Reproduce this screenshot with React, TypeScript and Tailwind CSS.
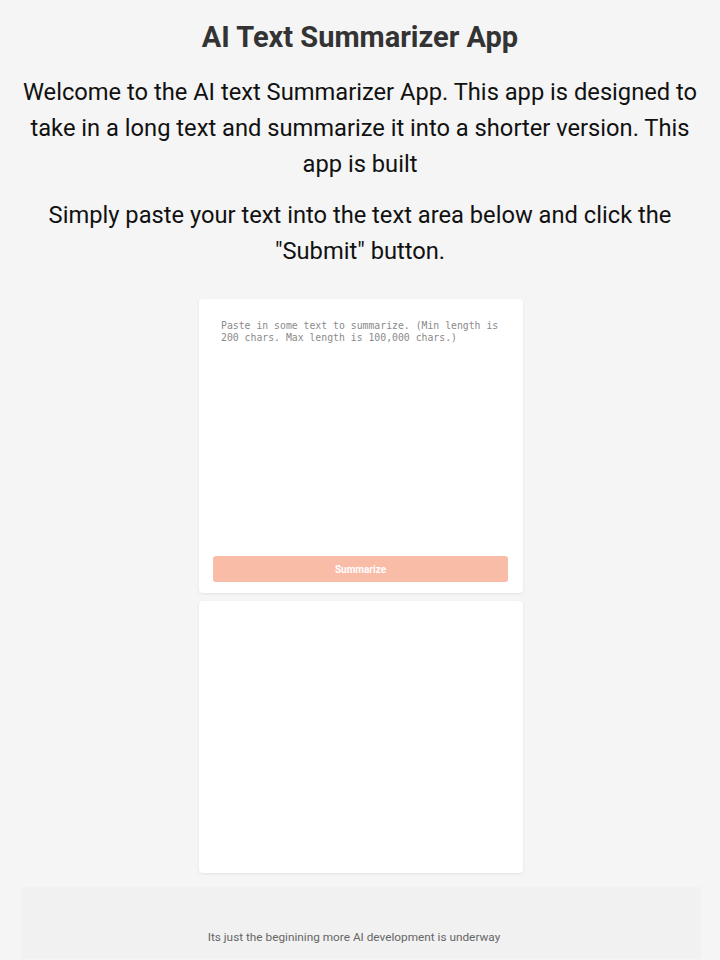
import React from "react";

export default function App() {
  return (
    <div className="min-h-[960px] bg-[#f5f5f5] font-['Roboto',sans-serif]">
      <div className="px-[16px] pt-[16px] text-center">
        <h1 className="text-[29px] leading-[42px] font-bold text-[#333333]">AI Text Summarizer App</h1>
        <p className="mt-[16px] text-[23.7px] leading-[36px] text-[#111111]">
          Welcome to the AI text Summarizer App. This app is designed to take in a long text and summarize it into a shorter version. This app is built
        </p>
        <p className="mt-[15px] px-[20px] text-[23.7px] leading-[36px] text-[#111111]">
          Simply paste your text into the text area below and click the "Submit" button.
        </p>
      </div>
      <div className="mt-[30px] pl-[2px] flex flex-col items-center gap-[8px]">
        <div className="w-[324px] h-[294px] bg-white rounded-[4px] shadow-[0_1px_3px_rgba(0,0,0,0.08)] px-[14px] pt-[15px] pb-[11px] flex flex-col">
          <textarea
            className="flex-1 resize-none outline-none px-[8px] py-[6px] text-[9.8px] leading-[12px] font-['DejaVu_Sans_Mono',monospace] placeholder:text-[#8a8a8a]"
            placeholder="Paste in some text to summarize. (Min length is 200 chars. Max length is 100,000 chars.)"
          />
          <button className="mt-[6px] h-[26px] w-[295px] rounded-[3px] bg-[#f9bca7] text-white text-[10px] font-bold">
            Summarize
          </button>
        </div>
        <div className="w-[324px] h-[272px] bg-white rounded-[4px] shadow-[0_1px_3px_rgba(0,0,0,0.08)]" />
      </div>
      <div className="ml-[21px] w-[680px] mt-[14px] h-[72px] bg-[#f1f1f1] pt-[42px] pr-[14px] text-center">
        <p className="text-[11.8px] leading-[16px] text-[#666666]">Its just the beginining more AI development is underway</p>
      </div>
    </div>
  );
}
